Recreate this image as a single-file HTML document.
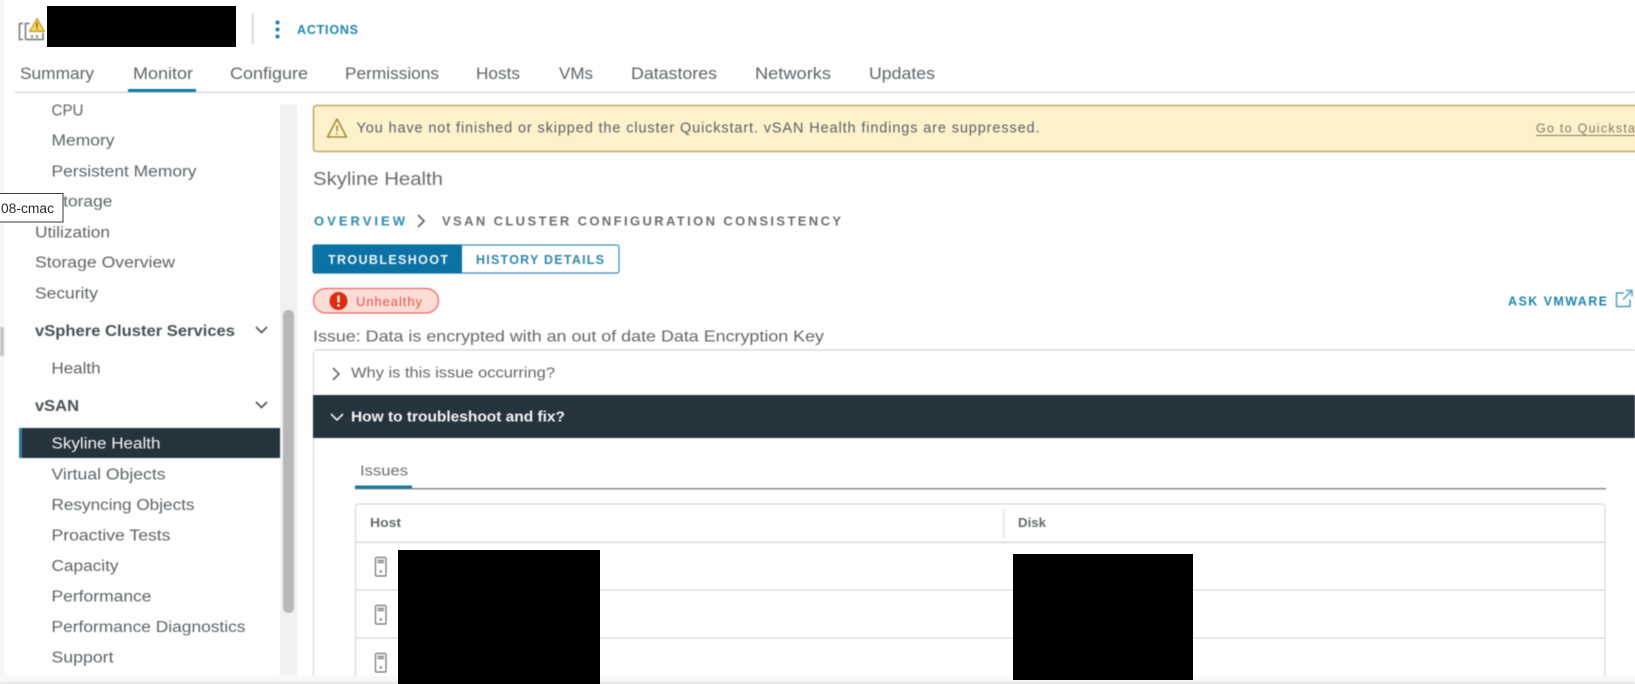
<!DOCTYPE html>
<html lang="en">
<head>
<meta charset="utf-8">
<title>Skyline Health</title>
<style>
html,body{margin:0;padding:0;width:1635px;height:684px;overflow:hidden;background:#fefefe}
svg{display:block;position:absolute;left:0;top:0}
text{font-family:"Liberation Sans",sans-serif;fill:#5e6468;font-size:15.5px}
.s{filter:blur(.4px)}
.tab{font-size:16.5px;fill:#5f6569}
.b{font-weight:bold;fill:#4a5256}
.link{fill:#1f86ad}
</style>
</head>
<body>
<svg width="1635" height="684" viewBox="0 0 1635 684" xmlns="http://www.w3.org/2000/svg">
<rect width="1635" height="684" fill="#fefefe"/>
<g class="s">
<!-- left edge -->
<rect x="0" y="0" width="4" height="684" fill="#f5f5f6"/>
<rect x="0" y="327" width="4" height="29" fill="#c6c6c6"/>
<!-- bottom strip -->
<rect x="0" y="676" width="1635" height="6" fill="#f8f8fa"/>
<rect x="0" y="682" width="1635" height="2" fill="#e4e4e6"/>

<!-- header icon -->
<g fill="none" stroke="#747474" stroke-width="1.500">
<path d="M23 23.500h-3.500v16H23"/>
<path d="M25.500 39.500V23.500h4M25.500 39.500H43V33"/>
<path d="M32 35v3M37 35v3"/>
</g>
<path d="M37 18.500L44.500 31.500H29.500Z" fill="#f6d259" stroke="#c09c2c" stroke-width="1.200" stroke-linejoin="round"/>
<path d="M37 22.500v5M37 28.700v1.200" stroke="#6b5814" stroke-width="1.300"/>

<rect x="252" y="14" width="1.500" height="30" fill="#cfcfcf"/>
<circle cx="277.500" cy="22.500" r="2" fill="#1f7fa8"/>
<circle cx="277.500" cy="29.500" r="2" fill="#1f7fa8"/>
<circle cx="277.500" cy="36.500" r="2" fill="#1f7fa8"/>
<text class="link" x="297" y="34" style="font-size:12.500px;font-weight:bold" textLength="61">ACTIONS</text>

<!-- tabs -->
<text class="tab" x="20" y="79" textLength="74" lengthAdjust="spacingAndGlyphs">Summary</text>
<text class="tab" x="133" y="79" textLength="60" lengthAdjust="spacingAndGlyphs">Monitor</text>
<text class="tab" x="230" y="79" textLength="78" lengthAdjust="spacingAndGlyphs">Configure</text>
<text class="tab" x="345" y="79" textLength="94" lengthAdjust="spacingAndGlyphs">Permissions</text>
<text class="tab" x="476" y="79" textLength="44" lengthAdjust="spacingAndGlyphs">Hosts</text>
<text class="tab" x="559" y="79" textLength="34" lengthAdjust="spacingAndGlyphs">VMs</text>
<text class="tab" x="631" y="79" textLength="86" lengthAdjust="spacingAndGlyphs">Datastores</text>
<text class="tab" x="755" y="79" textLength="76" lengthAdjust="spacingAndGlyphs">Networks</text>
<text class="tab" x="869" y="79" textLength="66" lengthAdjust="spacingAndGlyphs">Updates</text>
<rect x="15" y="91.500" width="1620" height="1.500" fill="#d6dade"/>
<rect x="128" y="89" width="68" height="3" fill="#0f79a8"/>

<!-- sidebar scrollbar -->
<rect x="280" y="105" width="17" height="570" fill="#f1f1f2"/>
<rect x="283" y="310" width="11" height="303" rx="5" fill="#b8b8b8"/>

<!-- sidebar -->
<text x="51.500" y="115.500" textLength="32" lengthAdjust="spacingAndGlyphs">CPU</text>
<text x="51.500" y="145.500" textLength="63" lengthAdjust="spacingAndGlyphs">Memory</text>
<text x="51.500" y="176.500" textLength="145" lengthAdjust="spacingAndGlyphs">Persistent Memory</text>
<text x="51.500" y="206.500" textLength="61" lengthAdjust="spacingAndGlyphs">Storage</text>
<text x="35" y="237.500" textLength="75" lengthAdjust="spacingAndGlyphs">Utilization</text>
<text x="35" y="267.500" textLength="140" lengthAdjust="spacingAndGlyphs">Storage Overview</text>
<text x="35" y="298.500" textLength="63" lengthAdjust="spacingAndGlyphs">Security</text>
<text class="b" x="35" y="336" textLength="200" lengthAdjust="spacingAndGlyphs">vSphere Cluster Services</text>
<path d="M256 327l5.500 5.500 5.500-5.500" fill="none" stroke="#4a5256" stroke-width="1.600"/>
<text x="51.500" y="373.500" textLength="49" lengthAdjust="spacingAndGlyphs">Health</text>
<text class="b" x="35" y="411" textLength="44" lengthAdjust="spacingAndGlyphs">vSAN</text>
<path d="M256 402l5.500 5.500 5.500-5.500" fill="none" stroke="#4a5256" stroke-width="1.600"/>
<rect x="19" y="428" width="261" height="30" fill="#25333d"/>
<rect x="19" y="428" width="3" height="30" fill="#2b7ea6"/>
<text x="51.500" y="448.500" textLength="109" lengthAdjust="spacingAndGlyphs" style="fill:#f2f4f5">Skyline Health</text>
<text x="51.500" y="479.500" textLength="114" lengthAdjust="spacingAndGlyphs">Virtual Objects</text>
<text x="51.500" y="510" textLength="143" lengthAdjust="spacingAndGlyphs">Resyncing Objects</text>
<text x="51.500" y="540.500" textLength="119" lengthAdjust="spacingAndGlyphs">Proactive Tests</text>
<text x="51.500" y="571" textLength="67" lengthAdjust="spacingAndGlyphs">Capacity</text>
<text x="51.500" y="601.500" textLength="100" lengthAdjust="spacingAndGlyphs">Performance</text>
<text x="51.500" y="632" textLength="194" lengthAdjust="spacingAndGlyphs">Performance Diagnostics</text>
<text x="51.500" y="662.500" textLength="62" lengthAdjust="spacingAndGlyphs">Support</text>

<!-- alert -->
<rect x="313.500" y="105.500" width="1330" height="46" rx="3" fill="#fdf2cb" stroke="#c4a762" stroke-width="1.500"/>
<path d="M337 119L346.500 137H327.500Z" fill="none" stroke="#a98a35" stroke-width="1.600" stroke-linejoin="round"/>
<path d="M337 125.500v6M337 133v1.500" stroke="#a98a35" stroke-width="1.600"/>
<text x="356.500" y="132.500" textLength="683" style="fill:#5c6066;font-size:14.500px">You have not finished or skipped the cluster Quickstart. vSAN Health findings are suppressed.</text>
<text x="1536" y="132.500" textLength="99" style="fill:#827c68;font-size:12.500px">Go to Quicksta</text>
<rect x="1536" y="135" width="99" height="1" fill="#827c68"/>

<!-- title -->
<text x="313" y="185" textLength="130" lengthAdjust="spacingAndGlyphs" style="font-size:18px;fill:#6a6e70">Skyline Health</text>
<text x="314" y="225.500" textLength="91" style="font-size:13px;font-weight:bold;fill:#2b8bb0">OVERVIEW</text>
<path d="M418 215l6 6-6 6" fill="none" stroke="#666" stroke-width="1.700"/>
<text x="442" y="225.500" textLength="399" style="font-size:13px;font-weight:bold;fill:#6c7072">VSAN CLUSTER CONFIGURATION CONSISTENCY</text>

<!-- buttons -->
<rect x="313" y="245" width="306" height="28" rx="2" fill="#fff" stroke="#3f8fb3" stroke-width="1.200"/>
<path d="M462 244.500H315a2.500 2.500 0 0 0-2.500 2.500v24a2.500 2.500 0 0 0 2.500 2.500H462Z" fill="#0b72a3"/>
<text x="328" y="264" textLength="120" style="font-size:12.500px;fill:#eef5f9;font-weight:bold">TROUBLESHOOT</text>
<text x="476" y="264" textLength="128" style="font-size:12.500px;fill:#2f87ab;font-weight:bold">HISTORY DETAILS</text>

<!-- pill -->
<rect x="313.500" y="288.500" width="125" height="24.500" rx="12.200" fill="#fbdcd7" stroke="#f06a5c" stroke-width="1.300"/>
<circle cx="338.500" cy="301" r="9" fill="#dd2a12"/>
<path d="M338.500 295.500v7" stroke="#fff" stroke-width="2.200"/>
<circle cx="338.500" cy="305.500" r="1.300" fill="#fff"/>
<text x="356" y="306" textLength="66" style="font-size:13px;fill:#e2564a">Unhealthy</text>

<text class="link" x="1508" y="305.500" textLength="99" style="font-size:12.500px;font-weight:bold">ASK VMWARE</text>
<path d="M1624 293h-7.500v13.500h13.500v-7M1623 299.500l9-9M1626 290.500h6v6" fill="none" stroke="#4a9dbd" stroke-width="1.400"/>

<text x="313" y="341.500" textLength="511" lengthAdjust="spacingAndGlyphs" style="font-size:16px;fill:#63676a">Issue: Data is encrypted with an out of date Data Encryption Key</text>

<!-- accordion -->
<path d="M313.500 676V353a3 3 0 0 1 3-3H1635" fill="#fff" stroke="#d4d6d8" stroke-width="1.200"/>
<rect x="314" y="351" width="1321" height="325" fill="#fff"/>
<path d="M333 368l6 6-6 6" fill="none" stroke="#666" stroke-width="1.600"/>
<text x="351" y="377.500" textLength="204" lengthAdjust="spacingAndGlyphs" style="font-size:14.500px;fill:#63676a">Why is this issue occurring?</text>
<rect x="313" y="395" width="1322" height="43" fill="#25333d"/>
<path d="M331 414l6 6 6-6" fill="none" stroke="#eef1f2" stroke-width="1.600"/>
<text x="351" y="421.500" textLength="214" lengthAdjust="spacingAndGlyphs" style="font-size:14.500px;fill:#f3f5f6;font-weight:bold">How to troubleshoot and fix?</text>

<!-- Issues tab -->
<text x="360" y="475.500" textLength="48" lengthAdjust="spacingAndGlyphs" style="font-size:15px;fill:#6a6e70">Issues</text>
<rect x="355" y="488" width="1251" height="1.500" fill="#8a8c8e"/>
<rect x="355" y="485.500" width="57" height="3" fill="#1579a6"/>

<!-- table -->
<path d="M355.500 676V507a3 3 0 0 1 3-3H1602a3 3 0 0 1 3 3V676" fill="#fff" stroke="#d6d8da" stroke-width="1.200"/>
<rect x="356" y="541.500" width="1249" height="1.500" fill="#d6d8da"/>
<rect x="356" y="589.500" width="1249" height="1.200" fill="#d6d8da"/>
<rect x="356" y="637.500" width="1249" height="1.200" fill="#d6d8da"/>
<rect x="1003" y="509" width="1.200" height="29" fill="#dcdee0"/>
<text x="370" y="527" textLength="31" lengthAdjust="spacingAndGlyphs" style="font-size:12.500px;font-weight:bold;fill:#666a6d">Host</text>
<text x="1018" y="527" textLength="28" lengthAdjust="spacingAndGlyphs" style="font-size:12.500px;font-weight:bold;fill:#666a6d">Disk</text>

<!-- server icons -->
<g fill="none" stroke="#6f7274" stroke-width="1.200">
<rect x="375.500" y="557.500" width="10.500" height="18.500" rx=".8"/>
<path d="M377.500 560.500h6.500M377.500 562.500h6.500"/>
<rect x="375.500" y="605.500" width="10.500" height="18.500" rx=".8"/>
<path d="M377.500 608.500h6.500M377.500 610.500h6.500"/>
<rect x="375.500" y="653.500" width="10.500" height="18.500" rx=".8"/>
<path d="M377.500 656.500h6.500M377.500 658.500h6.500"/>
</g>
<circle cx="380.800" cy="571.500" r="1.200" fill="#6f7274"/>
<circle cx="380.800" cy="619.500" r="1.200" fill="#6f7274"/>
<circle cx="380.800" cy="667.500" r="1.200" fill="#6f7274"/>
</g>

<!-- redaction boxes -->
<rect x="47" y="6" width="189" height="41" fill="#000"/>
<rect x="398" y="550" width="202" height="134" fill="#000"/>
<rect x="1013" y="554" width="180" height="126" fill="#000"/>

<!-- tooltip -->
<rect x="-2" y="193.500" width="65" height="28.500" fill="#fff" stroke="#3a3a3a" stroke-width="1"/>
<text x="1" y="213" textLength="53" lengthAdjust="spacingAndGlyphs" style="font-size:13.500px;fill:#2a2a2a">08-cmac</text>
</svg>
</body>
</html>
